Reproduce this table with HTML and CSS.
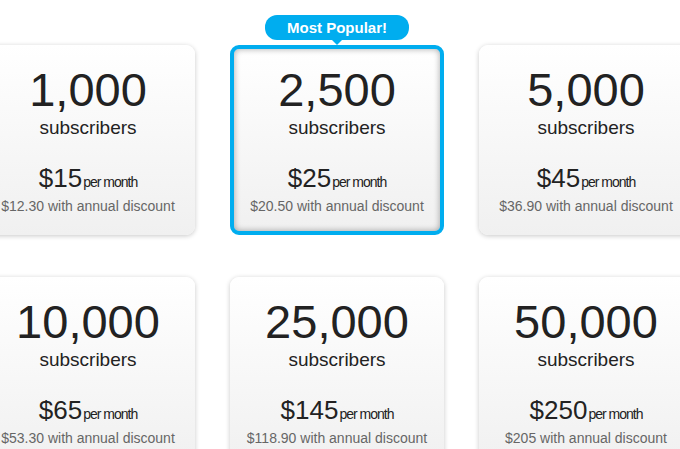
FILE: index.html
```html
<!DOCTYPE html>
<html>
<head>
<meta charset="utf-8">
<link rel="stylesheet" href="styles.css">
</head>
<body>
<div class="page">
  <div class="grid">
    <div class="card">
      <div class="count">1,000</div>
      <div class="unit">subscribers</div>
      <div class="price"><span class="amount">$15</span><span class="per">per month</span></div>
      <div class="discount">$12.30 with annual discount</div>
    </div>
    <div class="card card-popular">
      <div class="badge">Most Popular!</div>
      <div class="count">2,500</div>
      <div class="unit">subscribers</div>
      <div class="price"><span class="amount">$25</span><span class="per">per month</span></div>
      <div class="discount">$20.50 with annual discount</div>
    </div>
    <div class="card">
      <div class="count">5,000</div>
      <div class="unit">subscribers</div>
      <div class="price"><span class="amount">$45</span><span class="per">per month</span></div>
      <div class="discount">$36.90 with annual discount</div>
    </div>
    <div class="card">
      <div class="count">10,000</div>
      <div class="unit">subscribers</div>
      <div class="price"><span class="amount">$65</span><span class="per">per month</span></div>
      <div class="discount">$53.30 with annual discount</div>
    </div>
    <div class="card">
      <div class="count">25,000</div>
      <div class="unit">subscribers</div>
      <div class="price"><span class="amount">$145</span><span class="per">per month</span></div>
      <div class="discount">$118.90 with annual discount</div>
    </div>
    <div class="card">
      <div class="count">50,000</div>
      <div class="unit">subscribers</div>
      <div class="price"><span class="amount">$250</span><span class="per">per month</span></div>
      <div class="discount">$205 with annual discount</div>
    </div>
  </div>
</div>
</body>
</html>
```
FILE: styles.css
```css
html, body {
  margin: 0;
  padding: 0;
  overflow: hidden;
  background: #ffffff;
}

.page {
  width: 680px;
  height: 449px;
  overflow: hidden;
  font-family: "Liberation Sans", Arial, sans-serif;
  color: #222222;
}

.grid {
  display: grid;
  grid-template-columns: 214px 214px 214px;
  grid-auto-rows: 190px;
  column-gap: 35px;
  row-gap: 42px;
  margin-left: -19px;
  padding-top: 45px;
  width: 712px;
}

.card {
  position: relative;
  box-sizing: border-box;
  border-radius: 9px;
  background: linear-gradient(to bottom, #ffffff 0%, #f0f0f0 100%);
  box-shadow: 0 1px 5px rgba(0, 0, 0, 0.22);
  text-align: center;
  padding-top: 21px;
}

.card-popular {
  border: 4px solid #00adef;
  padding-top: 17px;
  border-radius: 9px;
  box-shadow: inset 0 0 6px rgba(0, 0, 0, 0.35);
}

.badge {
  position: absolute;
  left: 50%;
  top: -34px;
  transform: translateX(-50%);
  width: 144px;
  height: 25px;
  line-height: 25px;
  border-radius: 12px;
  background: #00adef;
  color: #ffffff;
  font-weight: bold;
  font-size: 15px;
  white-space: nowrap;
}

.badge::after {
  content: "";
  position: absolute;
  left: 50%;
  bottom: -5px;
  margin-left: -5px;
  border-left: 5px solid transparent;
  border-right: 5px solid transparent;
  border-top: 5px solid #00adef;
}

.count {
  font-size: 47px;
  line-height: 47px;
  color: #222222;
}

.unit {
  font-size: 19px;
  line-height: 23px;
  margin-top: 3px;
  color: #222222;
}

.price {
  margin-top: 24px;
  line-height: 30px;
  white-space: nowrap;
}

.amount {
  font-size: 26px;
  color: #222222;
}

.per {
  font-size: 14px;
  letter-spacing: -1px;
  color: #222222;
  margin-left: 1px;
}

.discount {
  font-size: 14px;
  line-height: 16px;
  margin-top: 1px;
  color: #666666;
  white-space: nowrap;
}
```
